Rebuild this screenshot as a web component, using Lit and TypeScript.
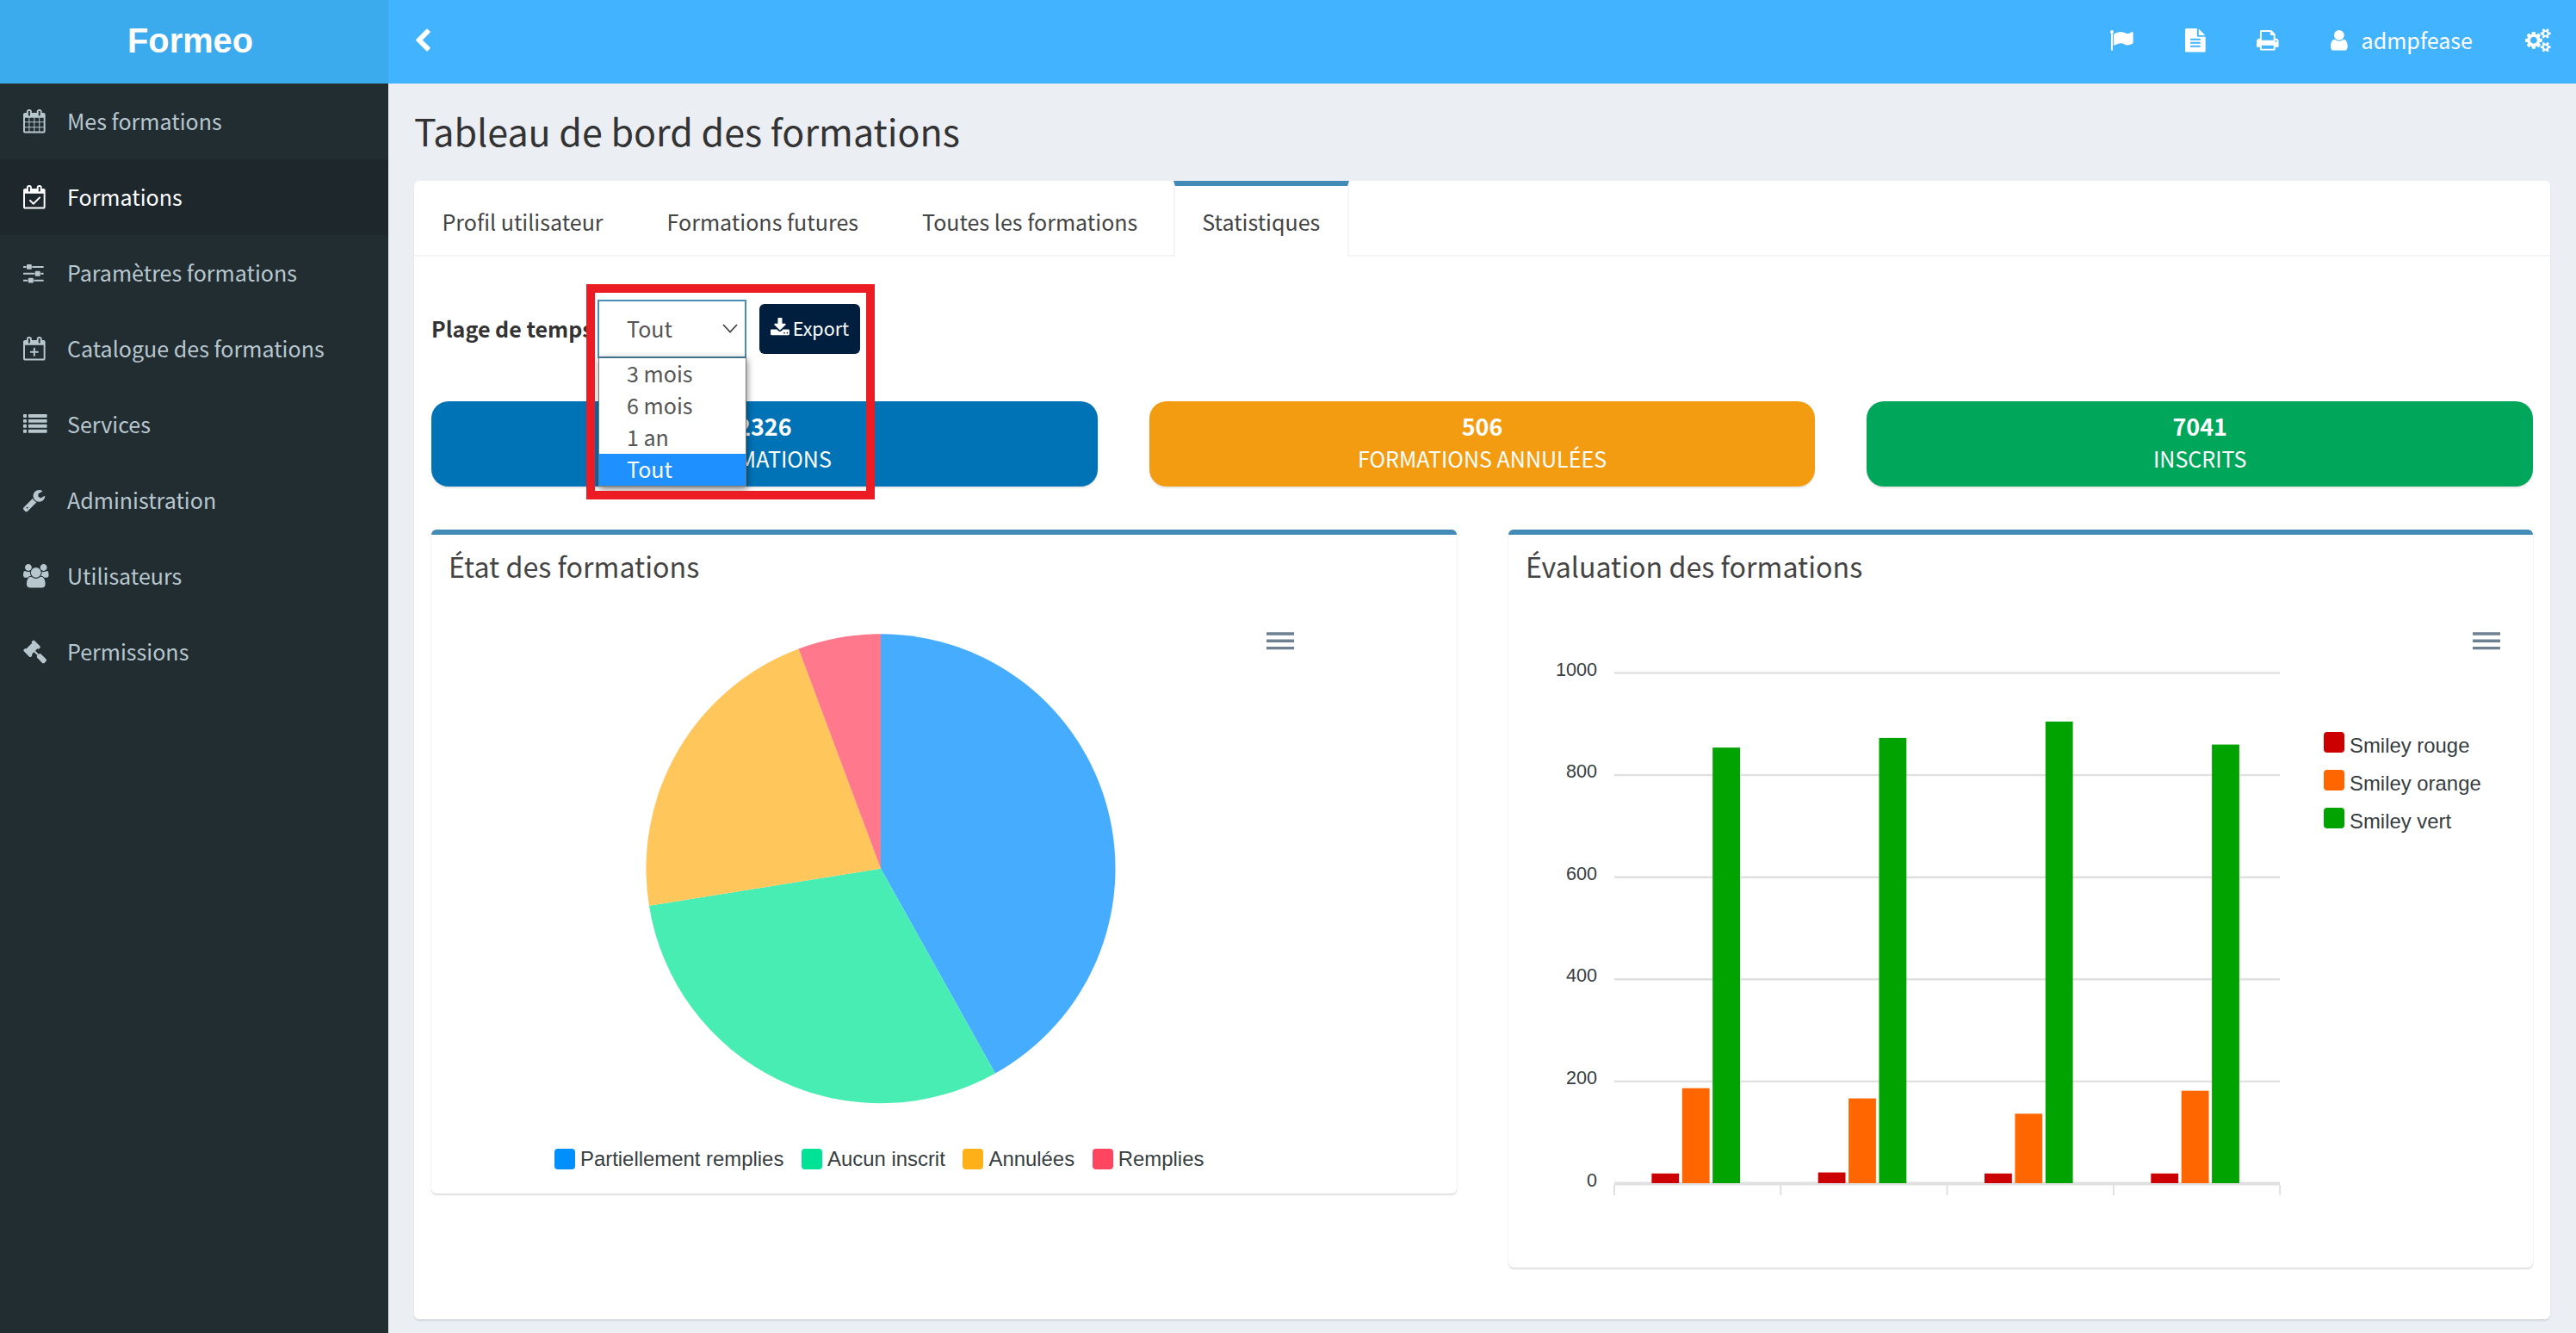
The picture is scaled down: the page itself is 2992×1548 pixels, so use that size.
import { LitElement, html, svg, css } from "lit";
import { customElement, property } from "lit/decorators.js";
import { classMap } from "lit/directives/class-map.js";
import { styleMap } from "lit/directives/style-map.js";

/* Each glyph: [left edge, width, path] on a 1792-unit-high grid. */
const CAL_FRAME =
  "M128 1664h1408v-1024h-1408v1024zM512 448v-288q0-14-9-23t-23-9h-64q-14 0-23 9t-9 23v288q0 14 9 23t23 9h64q14 0 23-9t9-23zm768 0v-288q0-14-9-23t-23-9h-64q-14 0-23 9t-9 23v288q0 14 9 23t23 9h64q14 0 23-9t9-23zm384-64v1280q0 52-38 90t-90 38h-1408q-52 0-90-38t-38-90v-1280q0-52 38-90t90-38h128v-96q0-66 47-113t113-47h64q66 0 113 47t47 113v96h384v-96q0-66 47-113t113-47h64q66 0 113 47t47 113v96h128q52 0 90 38t38 90z";

const GLYPHS: Record<string, [number, number, string]> = {
  calendar: [64, 1664,
    "M192 1664h288v-288h-288v288zm352 0h320v-288h-320v288zm-352-352h288v-320h-288v320zm352 0h320v-320h-320v320zm-352-384h288v-288h-288v288zm736 736h320v-288h-320v288zm-384-736h320v-288h-320v288zm768 736h288v-288h-288v288zm-384-352h320v-320h-320v320zm-352-864v-288q0-13-9.5-22.5t-22.5-9.5h-64q-13 0-22.5 9.5t-9.5 22.5v288q0 13 9.5 22.5t22.5 9.5h64q13 0 22.5-9.5t9.5-22.5zm736 864h288v-320h-288v320zm-384-384h320v-288h-320v288zm384 0h288v-288h-288v288zm32-480v-288q0-13-9.5-22.5t-22.5-9.5h-64q-13 0-22.5 9.5t-9.5 22.5v288q0 13 9.5 22.5t22.5 9.5h64q13 0 22.5-9.5t9.5-22.5zm384-64v1280q0 52-38 90t-90 38h-1408q-52 0-90-38t-38-90v-1280q0-52 38-90t90-38h128v-96q0-66 47-113t113-47h64q66 0 113 47t47 113v96h384v-96q0-66 47-113t113-47h64q66 0 113 47t47 113v96h128q52 0 90 38t38 90z"],
  calendarCheck: [0, 1664,
    CAL_FRAME + "M1303 964l-512 512q-10 9-23 9t-23-9l-288-288q-9-10-9-23t9-22l46-46q9-9 22-9t23 9l220 220 444-444q10-9 23-9t22 9l46 46q9 9 9 22t-9 23z"],
  calendarPlus: [0, 1664,
    CAL_FRAME + "M768 864q0-14 9-23t23-9h64q14 0 23 9t9 23v224h224q14 0 23 9t9 23v64q0 14-9 23t-23 9h-224v224q0 14-9 23t-23 9h-64q-14 0-23-9t-9-23v-224h-224q-14 0-23-9t-9-23v-64q0-14 9-23t23-9h224z"],
  sliders: [0, 1536,
    "M352 1408v128h-352v-128h352zm352-128q26 0 45 19t19 45v256q0 26-19 45t-45 19h-256q-26 0-45-19t-19-45v-256q0-26 19-45t45-19h256zm160-384v128h-864v-128h864zm-640-512v128h-224v-128h224zm1312 1024v128h-736v-128h736zm-960-1152q26 0 45 19t19 45v256q0 26-19 45t-45 19h-256q-26 0-45-19t-19-45v-256q0-26 19-45t45-19h256zm640 512q26 0 45 19t19 45v256q0 26-19 45t-45 19h-256q-26 0-45-19t-19-45v-256q0-26 19-45t45-19h256zm320 128v128h-224v-128h224zm0-512v128h-864v-128h864z"],
  list: [0, 1792,
    "M0 160q0-32 32-32h192q32 0 32 32v192q0 32-32 32h-192q-32 0-32-32zM0 544q0-32 32-32h192q32 0 32 32v192q0 32-32 32h-192q-32 0-32-32zM0 928q0-32 32-32h192q32 0 32 32v192q0 32-32 32h-192q-32 0-32-32zM0 1312q0-32 32-32h192q32 0 32 32v192q0 32-32 32h-192q-32 0-32-32zM384 160q0-32 32-32h1344q32 0 32 32v192q0 32-32 32h-1344q-32 0-32-32zM384 544q0-32 32-32h1344q32 0 32 32v192q0 32-32 32h-1344q-32 0-32-32zM384 928q0-32 32-32h1344q32 0 32 32v192q0 32-32 32h-1344q-32 0-32-32zM384 1312q0-32 32-32h1344q32 0 32 32v192q0 32-32 32h-1344q-32 0-32-32z"],
  wrench: [85, 1664,
    "M448 1472q0-26-19-45t-45-19-45 19-19 45 19 45 45 19 45-19 19-45zm644-420l-682 682q-37 37-90 37-52 0-91-37l-106-108q-38-36-38-90 0-53 38-91l681-681q39 98 114.5 173.5t173.5 114.5zm634-435q0 39-23 106-47 134-164.5 217.5t-258.5 83.5q-185 0-316.5-131.5t-131.5-316.5 131.5-316.5 316.5-131.5q58 0 121.5 16.5t107.5 46.5q16 11 16 28t-16 28l-293 169v224l193 107q5-3 79-48.5t135.5-81 70.5-35.5q15 0 23.5 10t8.5 25z"],
  users: [64, 1920,
    "M657 896q-162 5-265 128h-134q-82 0-138-40.5t-56-118.5q0-353 124-353 6 0 43.5 21t97.5 42.5 119 21.5q67 0 133-23-5 37-5 66 0 139 81 256zm1071 637q0 120-73 189.5t-194 69.5h-874q-121 0-194-69.5t-73-189.5q0-53 3.5-103.5t14-109 26.5-108.5 43-97.5 62-81 85.5-53.5 111.5-20q10 0 43 21.5t73 48 107 48 135 21.5 135-21.5 107-48 73-48 43-21.5q61 0 111.5 20t85.5 53.5 62 81 43 97.5 26.5 108.5 14 109 3.5 103.5zm-1024-1277q0 106-75 181t-181 75-181-75-75-181 75-181 181-75 181 75 75 181zm704 384q0 159-112.5 271.5t-271.5 112.5-271.5-112.5-112.5-271.5 112.5-271.5 271.5-112.5 271.5 112.5 112.5 271.5zm576 225q0 78-56 118.5t-138 40.5h-134q-103-123-265-128 81-117 81-256 0-29-5-66 66 23 133 23 59 0 119-21.5t97.5-42.5 43.5-21q124 0 124 353zm-128-609q0 106-75 181t-181 75-181-75-75-181 75-181 181-75 181 75 75 181z"],
  gavel: [20, 1792,
    "M1771 1536q0 53-37 90l-107 108q-39 37-91 37-53 0-90-37l-363-364q-38-36-38-90 0-53 43-96l-256-256-126 126q-14 14-34 14t-34-14q2 2 12.5 12t12.5 13 10 11.5 10 13.5 6 13.5 5.5 16.5 1.5 18q0 38-28 68-3 3-16.5 18t-19 20.5-18.5 16.5-22 15.5-22 9-26 4.5q-40 0-68-28l-408-408q-28-28-28-68 0-13 4.5-26t9-22 15.5-22 16.5-18.5 20.5-19 18-16.5q30-28 68-28 10 0 18 1.5t16.5 5.5 13.5 6 13.5 10 11.5 10 13 12.5 12 12.5q-14-14-14-34t14-34l348-348q14-14 34-14t34 14q-2-2-12.5-12t-12.5-13-10-11.5-10-13.5-6-13.5-5.5-16.5-1.5-18q0-38 28-68 3-3 16.5-18t19-20.5 18.5-16.5 22-15.5 22-9 26-4.5q40 0 68 28l408 408q28 28 28 68 0 13-4.5 26t-9 22-15.5 22-16.5 18.5-20.5 19-18 16.5q-30 28-68 28-10 0-18-1.5t-16.5-5.5-13.5-6-13.5-10-11.5-10-13-12.5-12-12.5q14 14 14 34t-14 34l-126 126 256 256q43-43 96-43 52 0 91 37l363 363q37 39 37 91z"],
  flag: [64, 1728,
    "M320 256q0 72-64 110v1266q0 13-9.5 22.5t-22.5 9.5h-64q-13 0-22.5-9.5t-9.5-22.5v-1266q-64-38-64-110 0-53 37.5-90.5t90.5-37.5 90.5 37.5 37.5 90.5zm1472 64v763q0 25-12.5 38.5t-39.5 27.5q-215 116-369 116-61 0-123.5-22t-108.5-48-115.5-48-142.5-22q-192 0-464 146-17 9-33 9-26 0-45-19t-19-45v-742q0-32 31-55 21-14 79-43 236-120 421-120 107 0 200 29t219 88q38 19 88 19 54 0 117.5-21t110-47 88-47 54.5-21q26 0 45 19t19 45z"],
  file: [128, 1536,
    "M1596 476q14 14 28 36h-472v-472q22 14 36 28zm-476 164h544v1056q0 40-28 68t-68 28h-1344q-40 0-68-28t-28-68v-1600q0-40 28-68t68-28h800v544q0 40 28 68t68 28zm160 736v-64q0-14-9-23t-23-9h-704q-14 0-23 9t-9 23v64q0 14 9 23t23 9h704q14 0 23-9t9-23zm0-256v-64q0-14-9-23t-23-9h-704q-14 0-23 9t-9 23v64q0 14 9 23t23 9h704q14 0 23-9t9-23zm0-256v-64q0-14-9-23t-23-9h-704q-14 0-23 9t-9 23v64q0 14 9 23t23 9h704q14 0 23-9t9-23z"],
  print: [64, 1664,
    "M448 1536h896v-256h-896v256zm0-640h896v-384h-160q-40 0-68-28t-28-68v-160h-640v640zm1152 64q0-26-19-45t-45-19-45 19-19 45 19 45 45 19 45-19 19-45zm128 0v416q0 13-9.5 22.5t-22.5 9.5h-224v160q0 40-28 68t-68 28h-960q-40 0-68-28t-28-68v-160h-224q-13 0-22.5-9.5t-9.5-22.5v-416q0-79 56.5-135.5t135.5-56.5h64v-544q0-40 28-68t68-28h672q40 0 88 20t76 48l152 152q28 28 48 76t20 88v256h64q79 0 135.5 56.5t56.5 135.5z"],
  user: [256, 1280,
    "M1536 1399q0 109-62.5 187t-150.5 78h-854q-88 0-150.5-78t-62.5-187q0-85 8.5-160.5t31.5-152 58.5-131 94-89 134.5-34.5q131 128 313 128t313-128q76 0 134.5 34.5t94 89 58.5 131 31.5 152 8.5 160.5zm-256-887q0 159-112.5 271.5t-271.5 112.5-271.5-112.5-112.5-271.5 112.5-271.5 271.5-112.5 271.5 112.5 112.5 271.5z"],
  cogs: [0, 1920,
    "M896 896q0-106-75-181t-181-75-181 75-75 181 75 181 181 75 181-75 75-181zm768 512q0-52-38-90t-90-38-90 38-38 90q0 53 37.5 90.5t90.5 37.5 90.5-37.5 37.5-90.5zm0-1024q0-52-38-90t-90-38-90 38-38 90q0 53 37.5 90.5t90.5 37.5 90.5-37.5 37.5-90.5zm-384 421v185q0 10-7 19.5t-16 10.5l-155 24q-11 35-32 76 34 48 90 115 7 11 7 20 0 12-7 19-23 30-82.5 89.5t-78.5 59.5q-11 0-21-7l-115-90q-37 19-77 31-11 108-23 155-7 24-30 24h-186q-11 0-20-7.5t-10-17.5l-23-153q-34-10-75-31l-118 89q-7 7-20 7-11 0-21-8-144-133-144-160 0-9 7-19 10-14 41-53t47-61q-23-44-35-82l-152-24q-10-1-17-9.5t-7-19.5v-185q0-10 7-19.5t16-10.5l155-24q11-35 32-76-34-48-90-115-7-11-7-20 0-12 7-20 22-30 82-89t79-59q11 0 21 7l115 90q34-18 77-32 11-108 23-154 7-24 30-24h186q11 0 20 7.5t10 17.5l23 153q34 10 75 31l118-89q8-7 20-7 11 0 21 8 144 133 144 160 0 8-7 19-12 16-42 54t-45 60q23 48 34 82l152 23q10 2 17 10.5t7 19.5zm640 533v140q0 16-149 31-12 27-30 52 51 113 51 138 0 4-4 7-122 71-124 71-8 0-46-47t-52-68q-20 2-30 2t-30-2q-14 21-52 68t-46 47q-2 0-124-71-4-3-4-7 0-25 51-138-18-25-30-52-149-15-149-31v-140q0-16 149-31 13-29 30-52-51-113-51-138 0-4 4-7 4-2 35-20t59-34 30-16q8 0 46 46.5t52 67.5q20-2 30-2t30 2q51-71 92-112l6-2q4 0 124 70 4 3 4 7 0 25-51 138 17 23 30 52 149 15 149 31zm0-1024v140q0 16-149 31-12 27-30 52 51 113 51 138 0 4-4 7-122 71-124 71-8 0-46-47t-52-68q-20 2-30 2t-30-2q-14 21-52 68t-46 47q-2 0-124-71-4-3-4-7 0-25 51-138-18-25-30-52-149-15-149-31v-140q0-16 149-31 13-29 30-52-51-113-51-138 0-4 4-7 4-2 35-20t59-34 30-16q8 0 46 46.5t52 67.5q20-2 30-2t30 2q51-71 92-112l6-2q4 0 124 70 4 3 4 7 0 25-51 138 17 23 30 52 149 15 149 31z"],
  chevronLeft: [410, 1036,
    "M1427 301l-531 531 531 531q19 19 19 45t-19 45l-166 166q-19 19-45 19t-45-19l-742-742q-19-19-19-45t19-45l742-742q19-19 45-19t45 19l166 166q19 19 19 45t-19 45z"],
  download: [64, 1664,
    "M1344 1344q0-26-19-45t-45-19-45 19-19 45 19 45 45 19 45-19 19-45zm256 0q0-26-19-45t-45-19-45 19-19 45 19 45 45 19 45-19 19-45zm128-224v320q0 40-28 68t-68 28h-1472q-40 0-68-28t-28-68v-320q0-40 28-68t68-28h465l135 136q58 56 136 56t136-56l136-136h464q40 0 68 28t28 68zm-325-569q17 41-14 70l-448 448q-18 19-45 19t-45-19l-448-448q-31-29-14-70 17-39 59-39h256v-448q0-26 19-45t45-19h256q26 0 45 19t19 45v448h256q42 0 59 39z"],
};

@customElement("fa-glyph")
export class FaGlyph extends LitElement {
  @property() name = "calendar";
  @property({ type: Number }) size = 27.6;

  static styles = css`
    :host { display: inline-flex; flex: none; }
    .glyph { display: block; fill: currentColor; fill-rule: nonzero; overflow: visible; }
  `;

  render() {
    const [x, w, d] = GLYPHS[this.name];
    return html`<svg class="glyph" viewBox="${x} 0 ${w} 1792"
      width=${(w * this.size) / 1792} height=${this.size}><path d=${d} /></svg>`;
  }
}

const MENU = [
  { icon: "calendar", label: "Mes formations" },
  { icon: "calendarCheck", label: "Formations", active: true },
  { icon: "sliders", label: "Paramètres formations" },
  { icon: "calendarPlus", label: "Catalogue des formations" },
  { icon: "list", label: "Services" },
  { icon: "wrench", label: "Administration" },
  { icon: "users", label: "Utilisateurs" },
  { icon: "gavel", label: "Permissions" },
];

@customElement("side-menu")
export class SideMenu extends LitElement {
  static styles = css`
    :host { display: block; background: #222d32; }
    .item {
      display: flex; align-items: center; box-sizing: border-box; height: 88px;
      padding-left: 27px; color: #b8c7ce; font-size: 25.05px; line-height: 40px;
    }
    .item.active { background: #1e272c; color: #fff; }
    .icon { width: 51px; display: flex; }
    .label { padding-bottom: 2px; white-space: nowrap; }
  `;

  render() {
    return html`${MENU.map((m) => html`
      <div class=${classMap({ item: true, active: !!m.active })}>
        <span class="icon"><fa-glyph name=${m.icon}></fa-glyph></span>
        <span class="label">${m.label}</span>
      </div>`)}`;
  }
}

const SLICES = [
  { label: "Partiellement remplies", end: 150.8, fill: "#46adfe", key: "#008ffb" },
  { label: "Aucun inscrit", end: 260.9, fill: "#48edb4", key: "#00e396" },
  { label: "Annulées", end: 339.5, fill: "#fec65b", key: "#feb019" },
  { label: "Remplies", end: 360, fill: "#ff788b", key: "#ff4560" },
];

const burger = svg`<path d="M0 2h32M0 10.3h32M0 18.6h32" stroke="#6e8192" stroke-width="3.4" fill="none" />`;

@customElement("pie-chart")
export class PieChart extends LitElement {
  static styles = css`
    :host { display: block; font-family: "Liberation Sans", Arial, sans-serif; }
    .canvas { display: block; }
    .legend { display: flex; gap: 20.7px; padding: 34px 0 0 143px; }
    .entry { display: flex; align-items: center; gap: 6px; font-size: 23.9px; line-height: 26px; color: #373d3f; white-space: nowrap; }
    .key { width: 24px; height: 24px; border-radius: 4px; }
  `;

  private slice(start: number, end: number) {
    const r = 272.5;
    const p = (a: number) => {
      const t = (a * Math.PI) / 180;
      return `${(r * Math.sin(t)).toFixed(2)} ${(-r * Math.cos(t)).toFixed(2)}`;
    };
    return `M0 0L${p(start)}A${r} ${r} 0 ${end - start > 180 ? 1 : 0} 1 ${p(end)}Z`;
  }

  render() {
    return html`
      <svg class="canvas" width="1191" height="622" viewBox="501 677 1191 622">
        <g transform="translate(1023 1008.7)">
          ${SLICES.map((s, i) => svg`<path d=${this.slice(i ? SLICES[i - 1].end : 0, s.end)} fill=${s.fill} />`)}
        </g>
        <g transform="translate(1471 734)">${burger}</g>
      </svg>
      <div class="legend">
        ${SLICES.map((s) => html`<span class="entry">
          <span class="key" style=${styleMap({ background: s.key })}></span>${s.label}</span>`)}
      </div>`;
  }
}

const SERIES = [
  { label: "Smiley rouge", color: "#cc0000", values: [19, 21, 19, 19] },
  { label: "Smiley orange", color: "#ff6600", values: [186, 166, 136, 181] },
  { label: "Smiley vert", color: "#00a300", values: [853, 872, 904, 859] },
];

@customElement("bar-chart")
export class BarChart extends LitElement {
  static styles = css`
    :host { display: flex; font-family: "Liberation Sans", Arial, sans-serif; }
    .canvas { display: block; flex: none; }
    .tick { font-size: 21.6px; fill: #373d3f; text-anchor: end; }
    .side { display: flex; flex-direction: column; width: 243px; }
    .menu { display: block; margin: 57px 0 0 172.5px; }
    .legend { display: flex; flex-direction: column; gap: 18px; padding-top: 95px; }
    .entry { display: flex; gap: 6px; font-size: 23.9px; line-height: 26px; color: #373d3f; white-space: nowrap; }
    .key { width: 24px; height: 24px; border-radius: 4px; }
    .name { padding-top: 3px; height: 23px; }
  `;

  render() {
    const zero = 1374.5;
    const unit = 0.593;
    const step = 193.3;
    return html`
      <svg class="canvas" width="947" height="780" viewBox="1752 677 947 780">
        ${[0, 200, 400, 600, 800, 1000].map((v) => svg`
          <path d="M1875 ${zero - v * unit}H2648" stroke="#e0e0e0" stroke-width=${v ? 2.4 : 4} />
          <text class="tick" x="1855" y=${zero - v * unit + 3}>${v}</text>`)}
        ${[0, 1, 2, 3, 4].map((i) => svg`
          <path d="M${1875 + i * step} 1376V1388" stroke="#e0e0e0" stroke-width="2" />`)}
        ${SERIES.map((s, k) => s.values.map((v, i) => svg`
          <rect x=${1918.4 + i * step + k * 35.4} y=${zero - 0.5 - v * unit} width="31.8" height=${v * unit} fill=${s.color} />`))}
      </svg>
      <div class="side">
        <svg class="menu" width="32" height="21" viewBox="0 0 32 21">${burger}</svg>
        <div class="legend">
          ${SERIES.map((s) => html`<span class="entry">
            <span class="key" style=${styleMap({ background: s.color })}></span>
            <span class="name">${s.label}</span></span>`)}
        </div>
      </div>`;
  }
}

const TABS = ["Profil utilisateur", "Formations futures", "Toutes les formations", "Statistiques"];
const RANGES = ["3 mois", "6 mois", "1 an", "Tout"];
const STATS = [
  { value: "2326", label: "FORMATIONS", tone: "blue" },
  { value: "506", label: "FORMATIONS ANNULÉES", tone: "orange" },
  { value: "7041", label: "INSCRITS", tone: "green" },
];

@customElement("app-root")
export class AppRoot extends LitElement {
  static styles = css`
    :host {
      display: grid; grid-template-columns: 451px 1fr; grid-template-rows: 97px 1fr;
      height: 1548px; overflow: hidden; background: #ebeff4; color: #333;
      font-family: "Noto Sans CJK SC", "Source Sans Pro", sans-serif; font-size: 25.05px;
    }
    .brand {
      display: flex; align-items: center; justify-content: center; background: #3cabee; color: #fff;
      font: bold 39.8px/50px "Liberation Sans", Arial, sans-serif; padding: 0 9px 3px 0;
    }
    .topbar { display: flex; align-items: center; background: #42b4ff; color: #fff; padding: 0 29px 3px 32px; }
    .spacer { flex: 1; }
    .actions { display: flex; align-items: center; }
    .flag { margin-right: 60px; }
    .file { margin-right: 60px; }
    .print { margin-right: 60px; }
    .account { display: flex; align-items: center; gap: 16px; margin-right: 61.5px; line-height: 40px; }
    .login { padding-bottom: 3px; }
    .content { padding: 26px 30px 0; }
    .title { margin: 0; font-weight: 400; font-size: 43px; line-height: 56px; height: 87px; }
    .panel {
      box-sizing: border-box; height: 1322px; background: #fff; border-radius: 6px;
      box-shadow: 0 2px 2px rgba(0, 0, 0, 0.1);
    }
    .tabs { display: flex; gap: 9px; box-sizing: border-box; height: 88px; box-shadow: inset 0 -2px #f4f4f4; }
    .tab {
      display: flex; align-items: center; box-sizing: border-box; height: 88px; padding: 0 30.5px;
      border: 2px solid transparent; border-top-width: 6px; border-bottom: 0; color: #444; white-space: nowrap;
    }
    .tab.active { background: #fff; padding: 0 31.5px; border-color: #3c8dbc #f4f4f4; border-top-color: #438bb7; }
    .pane { padding: 50px 20px 0; }
    .filter { position: relative; display: flex; align-items: center; height: 68px; }
    .caption { width: 193px; font-weight: 700; line-height: 40px; white-space: nowrap; padding-bottom: 3px; box-sizing: border-box; }
    .select {
      display: flex; align-items: center; justify-content: space-between; box-sizing: border-box;
      width: 173px; height: 68px; border: 2px solid #4a8fb3; background: #fff; color: #555;
      padding: 0 8px 3px 32px; line-height: 40px;
    }
    .caret { display: block; fill: none; stroke: #444; stroke-width: 1.8; margin-top: 1px; }
    .options {
      position: absolute; z-index: 2; left: 194px; top: 66px; width: 172px; box-sizing: border-box;
      background: #fff; border: 1px solid #767676; border-top: 2px solid #40718c; box-shadow: 1px 3px 8px rgba(0, 0, 0, 0.45);
      color: #555;
    }
    .option { padding-left: 32px; height: 37px; line-height: 35px; }
    .option.chosen { background: #1e90ff; color: #fff; }
    .export {
      display: flex; align-items: center; justify-content: center; gap: 4px; box-sizing: border-box;
      width: 117px; height: 58px; margin-left: 15px; border-radius: 6px; background: #001f3f; color: #fff;
      font-size: 21.5px; line-height: 32px; padding-bottom: 2px;
    }
    .frame {
      position: absolute; z-index: 3; left: 180px; top: -18px; width: 335px; height: 250px;
      box-sizing: border-box; border: 10px solid #ec1c24;
    }
    .stats { display: grid; grid-template-columns: repeat(3, 1fr); gap: 60px; margin-top: 50px; }
    .stat {
      box-sizing: border-box; height: 99px; padding-top: 10px; border-radius: 20px; text-align: center;
      color: #fff; line-height: 38px; box-shadow: 0 2px 2px rgba(0, 0, 0, 0.1);
    }
    .blue { background: #0073b7; }
    .orange { background: #f39c12; }
    .green { background: #00a65a; }
    .value { height: 37px; font-weight: 700; font-size: 26.9px; }
    .boxes { display: grid; grid-template-columns: repeat(2, 1fr); gap: 60px; margin-top: 50px; align-items: start; }
    .box {
      box-sizing: border-box; border-top: 6px solid #438bb7; border-radius: 6px; background: #fff;
      box-shadow: 0 2px 2px rgba(0, 0, 0, 0.12), 0 0 1px rgba(0, 0, 0, 0.12);
    }
    .pie { height: 771px; }
    .bars { height: 857px; }
    .heading { margin: 0; padding: 16px 0 0 20px; font-weight: 400; font-size: 32.2px; line-height: 40px; color: #444; }
  `;

  render() {
    return html`
      <div class="brand">Formeo</div>
      <header class="topbar">
        <fa-glyph name="chevronLeft" size="29"></fa-glyph>
        <span class="spacer"></span>
        <div class="actions">
          <fa-glyph class="flag" name="flag"></fa-glyph>
          <fa-glyph class="file" name="file"></fa-glyph>
          <fa-glyph class="print" name="print"></fa-glyph>
          <span class="account"><fa-glyph name="user"></fa-glyph><span class="login">admpfease</span></span>
          <fa-glyph name="cogs"></fa-glyph>
        </div>
      </header>
      <side-menu></side-menu>
      <main class="content">
        <h1 class="title">Tableau de bord des formations</h1>
        <section class="panel">
          <nav class="tabs">
            ${TABS.map((t) => html`<span class=${classMap({ tab: true, active: t === "Statistiques" })}>${t}</span>`)}
          </nav>
          <div class="pane">
            <div class="filter">
              <span class="caption">Plage de temps</span>
              <span class="select">Tout
                <svg class="caret" width="18" height="11" viewBox="0 0 18 11"><path d="M1 1l8 8.5L17 1" /></svg>
              </span>
              <span class="export"><fa-glyph name="download" size="23.6"></fa-glyph>Export</span>
              <div class="options">
                ${RANGES.map((r) => html`<div class=${classMap({ option: true, chosen: r === "Tout" })}>${r}</div>`)}
              </div>
              <div class="frame"></div>
            </div>
            <div class="stats">
              ${STATS.map((s) => html`<div class="stat ${s.tone}">
                <div class="value">${s.value}</div><div>${s.label}</div></div>`)}
            </div>
            <div class="boxes">
              <section class="box pie">
                <h2 class="heading">État des formations</h2>
                <pie-chart></pie-chart>
              </section>
              <section class="box bars">
                <h2 class="heading">Évaluation des formations</h2>
                <bar-chart></bar-chart>
              </section>
            </div>
          </div>
        </section>
      </main>`;
  }
}
